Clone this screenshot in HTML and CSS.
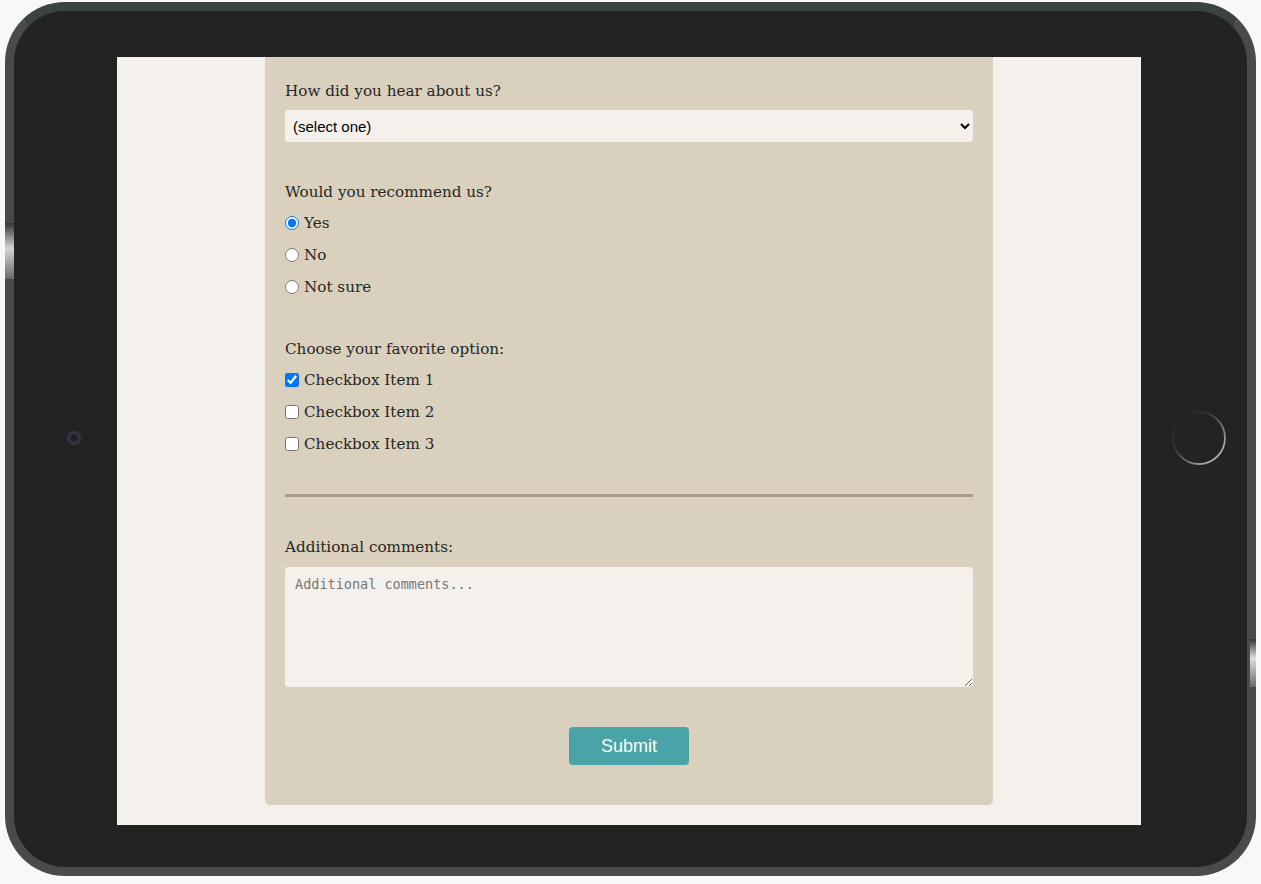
FILE: index.html
```html
<!DOCTYPE html>
<html lang="en">
<head>
<meta charset="utf-8">
<title>Feedback form</title>
<link rel="stylesheet" href="styles.css">
</head>
<body>
<div class="device">
  <div class="bezel-left"><span class="camera"></span></div>
  <div class="screen">
    <form class="card">
      <div class="group">
        <label class="q" for="src">How did you hear about us?</label>
        <select id="src" class="select">
          <option>(select one)</option>
          <option>Friend</option>
          <option>Search engine</option>
        </select>
      </div>
      <div class="group">
        <div class="q">Would you recommend us?</div>
        <label class="opt"><input type="radio" name="rec" checked>Yes</label>
        <label class="opt"><input type="radio" name="rec">No</label>
        <label class="opt"><input type="radio" name="rec">Not sure</label>
      </div>
      <div class="group">
        <div class="q">Choose your favorite option:</div>
        <label class="opt"><input type="checkbox" checked>Checkbox Item 1</label>
        <label class="opt"><input type="checkbox">Checkbox Item 2</label>
        <label class="opt"><input type="checkbox">Checkbox Item 3</label>
      </div>
      <hr class="rule">
      <div class="group last">
        <label class="q" for="cm">Additional comments:</label>
        <textarea id="cm" class="comments" placeholder="Additional comments..."></textarea>
      </div>
      <div class="actions"><button type="button" class="submit">Submit</button></div>
    </form>
  </div>
  <div class="bezel-right">
    <svg class="home" width="56" height="56" viewBox="0 0 56 56">
      <defs>
        <linearGradient id="hg" x1="0.1" y1="0.2" x2="0.8" y2="0.9">
          <stop offset="0" stop-color="#262626"/>
          <stop offset="0.35" stop-color="#3a3a3a"/>
          <stop offset="1" stop-color="#b0b0b0"/>
        </linearGradient>
      </defs>
      <circle cx="28" cy="28" r="26" fill="none" stroke="url(#hg)" stroke-width="1.8"/>
    </svg>
  </div>
</div>
</body>
</html>
```

FILE: styles.css
```css
html, body {
  margin: 0;
  padding: 0;
}
body {
  background: #f8f8f8;
  width: 1261px;
  height: 884px;
  overflow: hidden;
}
.device {
  position: relative;
  margin: 2px 0 0 5px;
  width: 1251px;
  height: 874px;
  box-sizing: border-box;
  border: 9px solid #4a4a4a;
  border-top-color: #3b4240;
  border-radius: 60px;
  background: #232323;
  display: flex;
  align-items: flex-start;
  padding-top: 46px;
}
.device::before {
  content: "";
  position: absolute;
  left: -9px;
  top: 212px;
  width: 9px;
  height: 56px;
  background: linear-gradient(180deg, #2f3533 0%, #d5d5d5 45%, #6a6a6a 100%);
}
.device::after {
  content: "";
  position: absolute;
  right: -9px;
  top: 628px;
  width: 6px;
  height: 48px;
  background: linear-gradient(180deg, #333 0%, #e0e0e0 40%, #6a6a6a 100%);
}
.bezel-left {
  width: 103px;
  height: 768px;
  display: flex;
  align-items: center;
}
.camera {
  margin-left: 53px;
  margin-bottom: 6px;
  width: 14px;
  height: 14px;
  border-radius: 50%;
  background: radial-gradient(circle, #1e1e26 0 3px, #33333c 4px 7px);
  box-shadow: 0 0 2px #3a3a44;
}
.bezel-right {
  width: 106px;
  height: 768px;
  display: flex;
  align-items: center;
}
.home {
  margin-left: 30px;
  margin-bottom: 6px;
}
.screen {
  width: 1024px;
  height: 768px;
  background: #f4f1ec;
  overflow: hidden;
  display: flex;
  justify-content: center;
  align-items: flex-start;
}
.card {
  width: 728px;
  box-sizing: border-box;
  background: #d9d1bd;
  padding: 22px 20px 40px;
  border-radius: 0 0 5px 5px;
  font-family: "DejaVu Serif", "Liberation Serif", serif;
  font-size: 15.2px;
  color: #262626;
}
.group {
  display: flex;
  flex-direction: column;
  margin-bottom: 30px;
}
.group.last {
  margin-bottom: 0;
}
.q {
  display: block;
  line-height: 24px;
  margin-bottom: 7px;
}
.select {
  height: 32px;
  border: none;
  border-radius: 4px;
  background: #f4f1ec;
  font-family: "Liberation Sans", Arial, sans-serif;
  font-size: 15px;
  color: #000;
  padding: 0 4px;
  margin-top: 0;
  margin-bottom: 8px;
}
.opt {
  display: flex;
  align-items: center;
  line-height: 24px;
  margin-bottom: 8px;
}
.opt input {
  margin: 0 5px 0 0;
  width: 14px;
  height: 14px;
}
.rule {
  border: none;
  height: 3px;
  background: #aa9b88;
  margin: 1px 0 38px;
}
.comments {
  height: 120px;
  box-sizing: border-box;
  border: none;
  border-radius: 4px;
  background: #f4f1ec;
  padding: 9px 10px;
  font-family: "DejaVu Sans Mono", "Liberation Mono", monospace;
  font-size: 13.5px;
  margin-top: 1px;
  resize: vertical;
}
.comments::placeholder {
  color: #777;
}
.actions {
  display: flex;
  justify-content: center;
  margin-top: 40px;
}
.submit {
  width: 120px;
  height: 38px;
  border: none;
  border-radius: 4px;
  background: #48a4a6;
  color: #fff;
  font-family: "Liberation Sans", Arial, sans-serif;
  font-size: 18px;
}
```
